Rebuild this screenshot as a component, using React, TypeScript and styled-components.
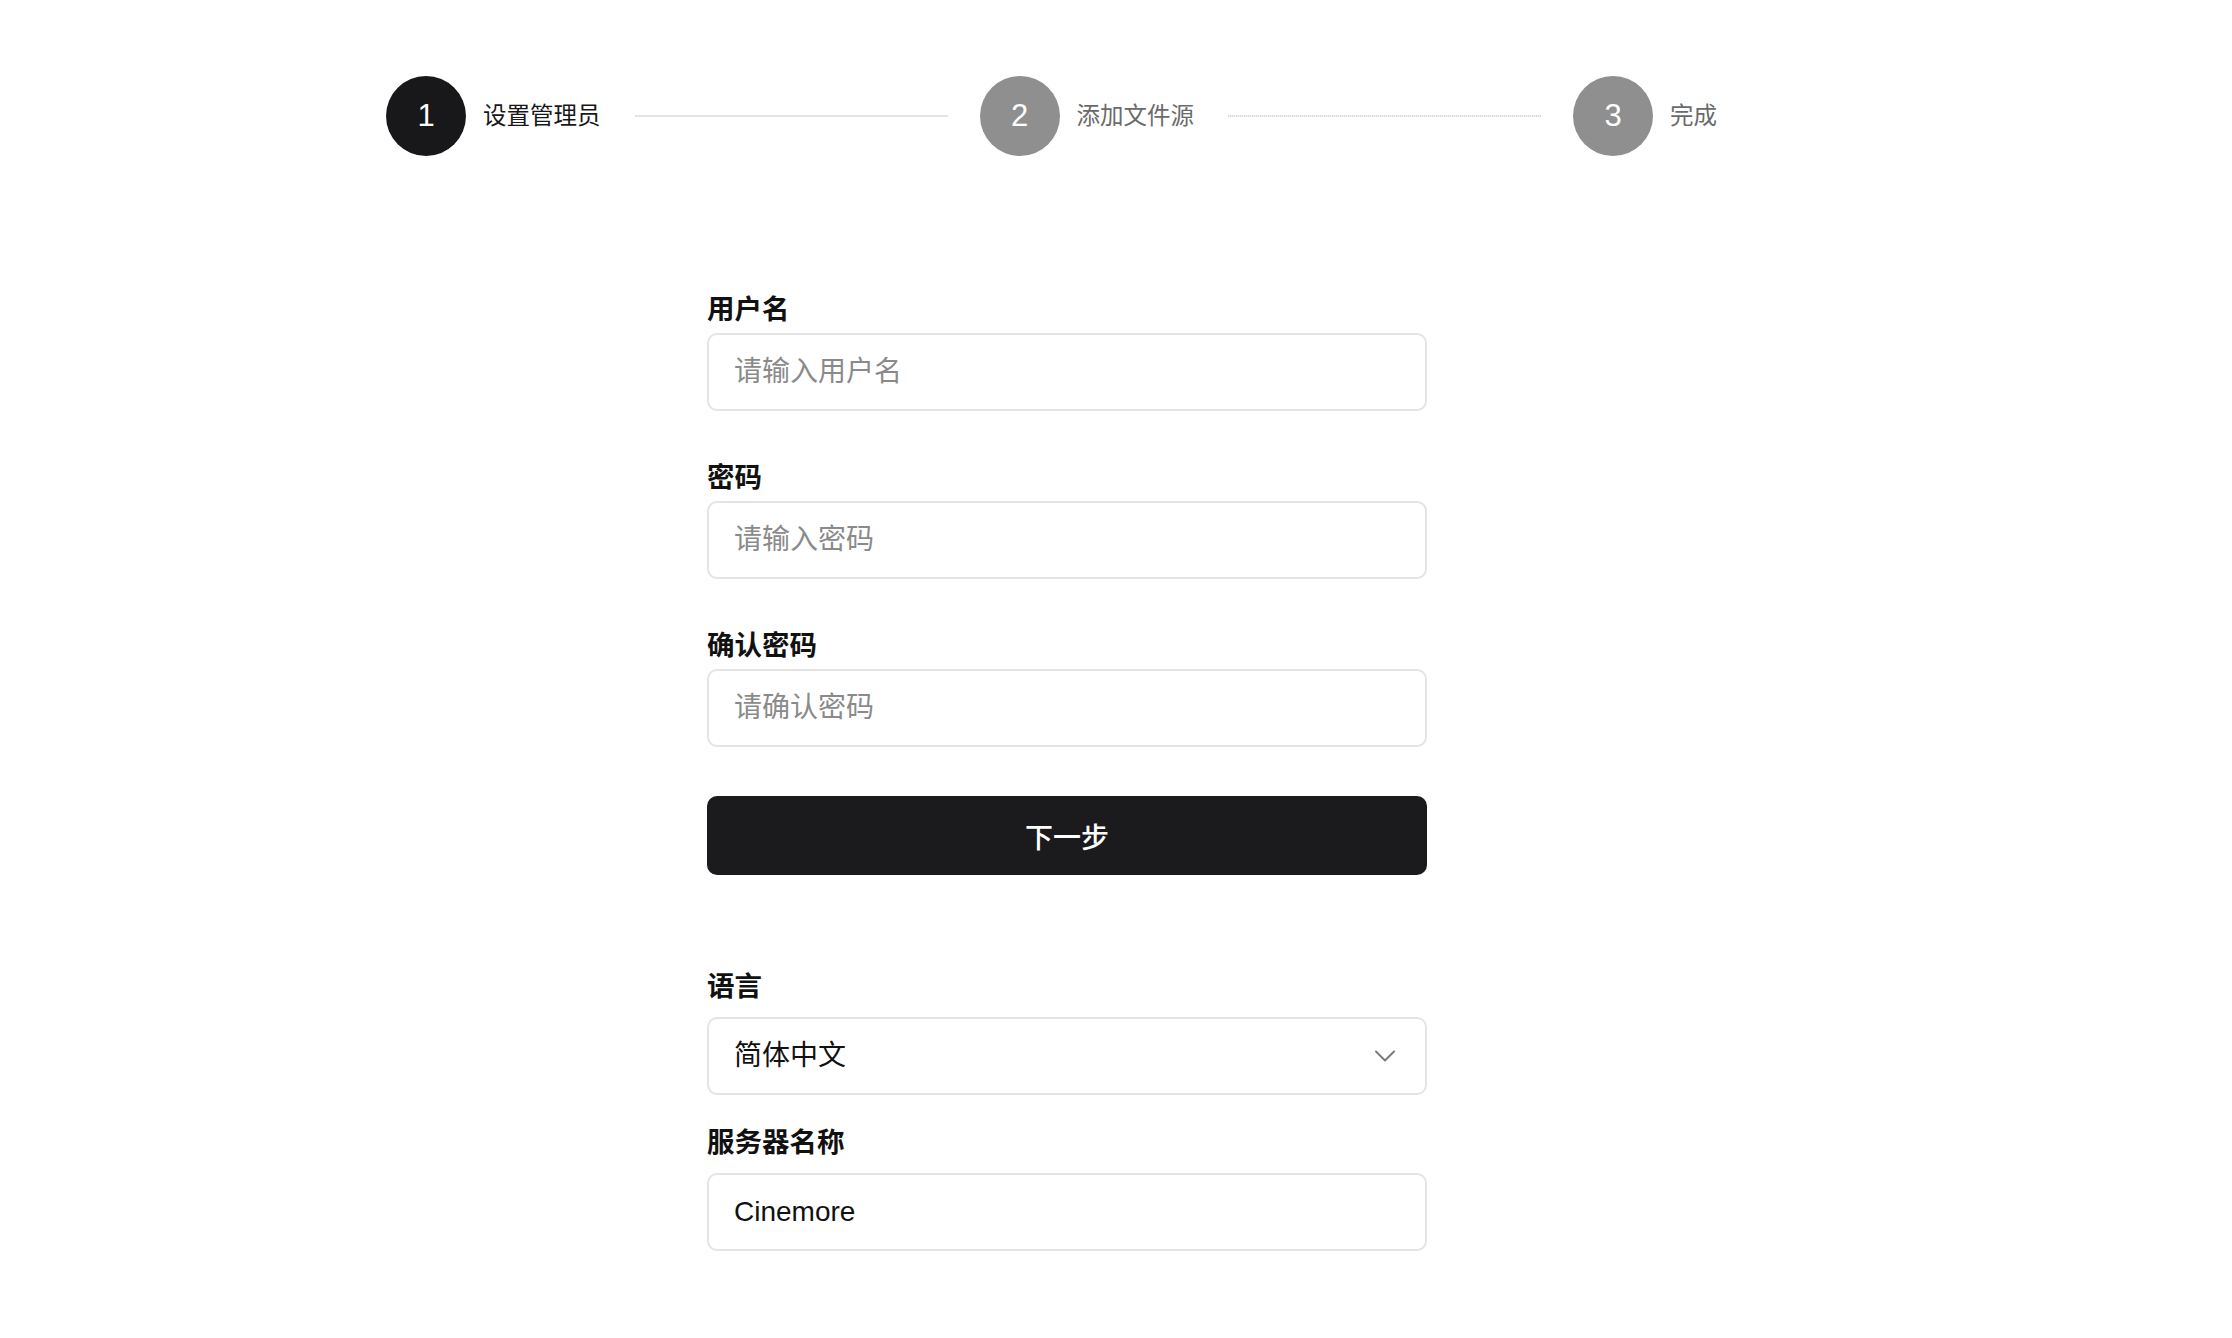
import React from "react";
import styled, { createGlobalStyle } from "styled-components";
import { ChevronDown } from "lucide-react";

const GlobalStyle = createGlobalStyle`
  html, body {
    margin: 0;
    padding: 0;
    background: #ffffff;
  }
  body {
    font-family: "Liberation Sans", "Noto Sans CJK SC", sans-serif;
    color: #111111;
  }
  * { box-sizing: border-box; }
`;

const Page = styled.div`
  min-height: 100vh;
  padding: 76px 0 80px 386px;
  display: flex;
  flex-direction: column;
  align-items: flex-start;
`;

const Stepper = styled.div`
  width: 1331px;
  display: flex;
  align-items: center;
`;

const Step = styled.div<{ $last?: boolean }>`
  display: flex;
  align-items: center;
  flex: ${(p) => (p.$last ? "none" : "1 1 0")};
`;

const Circle = styled.div<{ $active?: boolean }>`
  width: 80px;
  height: 80px;
  border-radius: 50%;
  flex: none;
  display: flex;
  align-items: center;
  justify-content: center;
  background: ${(p) => (p.$active ? "#18181a" : "#8f8f8f")};
  color: #ffffff;
  font-size: 31px;
  font-family: "Liberation Sans", "Noto Sans CJK SC", sans-serif;
`;

const StepLabel = styled.span<{ $active?: boolean }>`
  margin-left: 17px;
  font-size: 23.5px;
  line-height: 32px;
  white-space: nowrap;
  color: ${(p) => (p.$active ? "#18181a" : "#6a6a6a")};
`;

const Connector = styled.div<{ $dotted?: boolean }>`
  flex: 1;
  margin: 0 32px 0 34px;
  height: 2px;
  background: ${(p) =>
    p.$dotted
      ? "repeating-linear-gradient(90deg, #dadada 0 1px, #f1f1f1 1px 2px)"
      : "#e4e4e4"};
`;

const Form = styled.div`
  width: 720px;
  margin-left: 321px;
  margin-top: 136px;
  display: flex;
  flex-direction: column;
`;

const Section = styled.div<{ $gap: number }>`
  display: flex;
  flex-direction: column;
  gap: ${(p) => p.$gap}px;
`;

const Field = styled.div<{ $labelGap: number }>`
  display: flex;
  flex-direction: column;
  gap: ${(p) => p.$labelGap}px;
`;

const Label = styled.label`
  font-size: 27.5px;
  line-height: 36px;
  font-weight: 700;
  color: #111111;
`;

const TextInput = styled.input`
  width: 100%;
  height: 78px;
  padding: 0 25px;
  border: 2px solid #e4e4e4;
  border-radius: 10px;
  background: #ffffff;
  font-family: "Liberation Sans", "Noto Sans CJK SC", sans-serif;
  font-size: 28px;
  color: #111111;
  outline: none;
  &::placeholder {
    color: #8a8a8a;
  }
`;

const PrimaryButton = styled.button`
  width: 100%;
  height: 79px;
  border: none;
  border-radius: 10px;
  background: #1b1b1d;
  color: #ffffff;
  font-family: "Liberation Sans", "Noto Sans CJK SC", sans-serif;
  font-size: 28px;
  font-weight: 500;
  cursor: pointer;
`;

const SettingsSection = styled(Section)`
  margin-top: 94px;
`;

const SelectBox = styled.div`
  width: 100%;
  height: 78px;
  padding: 0 22px 0 25px;
  border: 2px solid #e4e4e4;
  border-radius: 10px;
  display: flex;
  align-items: center;
  justify-content: space-between;
  font-size: 28px;
  color: #111111;
  cursor: pointer;
`;

const SelectValue = styled.span`
  line-height: 1;
`;

const steps = [
  { n: 1, label: "设置管理员" },
  { n: 2, label: "添加文件源" },
  { n: 3, label: "完成" },
];

export default function App() {
  return (
    <>
      <GlobalStyle />
      <Page>
        <Stepper>
          {steps.map((s, i) => {
            const last = i === steps.length - 1;
            return (
              <Step key={s.n} $last={last}>
                <Circle $active={i === 0}>{s.n}</Circle>
                <StepLabel $active={i === 0}>{s.label}</StepLabel>
                {!last && <Connector $dotted={i === 1} />}
              </Step>
            );
          })}
        </Stepper>

        <Form>
          <Section $gap={49}>
            <Field $labelGap={5}>
              <Label>用户名</Label>
              <TextInput placeholder="请输入用户名" />
            </Field>
            <Field $labelGap={5}>
              <Label>密码</Label>
              <TextInput type="password" placeholder="请输入密码" />
            </Field>
            <Field $labelGap={5}>
              <Label>确认密码</Label>
              <TextInput type="password" placeholder="请确认密码" />
            </Field>
            <PrimaryButton>下一步</PrimaryButton>
          </Section>

          <SettingsSection $gap={30}>
            <Field $labelGap={12}>
              <Label>语言</Label>
              <SelectBox>
                <SelectValue>简体中文</SelectValue>
                <ChevronDown size={36} strokeWidth={1.3} color="#7a7a7a" />
              </SelectBox>
            </Field>
            <Field $labelGap={12}>
              <Label>服务器名称</Label>
              <TextInput defaultValue="Cinemore" />
            </Field>
          </SettingsSection>
        </Form>
      </Page>
    </>
  );
}
